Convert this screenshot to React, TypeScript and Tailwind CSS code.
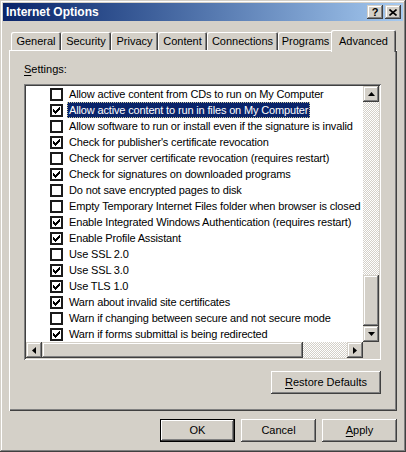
import React from 'react';

const settings: [string, boolean][] = [
  ['Allow active content from CDs to run on My Computer', false],
  ['Allow active content to run in files on My Computer', true],
  ['Allow software to run or install even if the signature is invalid', false],
  ["Check for publisher's certificate revocation", true],
  ['Check for server certificate revocation (requires restart)', false],
  ['Check for signatures on downloaded programs', true],
  ['Do not save encrypted pages to disk', false],
  ['Empty Temporary Internet Files folder when browser is closed', false],
  ['Enable Integrated Windows Authentication (requires restart)', true],
  ['Enable Profile Assistant', true],
  ['Use SSL 2.0', false],
  ['Use SSL 3.0', true],
  ['Use TLS 1.0', true],
  ['Warn about invalid site certificates', true],
  ['Warn if changing between secure and not secure mode', false],
  ['Warn if forms submittal is being redirected', true],
];

const tabs = [
  { label: 'General', w: 'w-[50px]' },
  { label: 'Security', w: 'w-[50px]' },
  { label: 'Privacy', w: 'w-[47px]' },
  { label: 'Content', w: 'w-[49px]' },
  { label: 'Connections', w: 'w-[71px]' },
  { label: 'Programs', w: 'w-[55px]' },
];

// classic 3d bevel for buttons / scroll parts
const raised =
  'bg-[#d4d0c8] shadow-[inset_-1px_-1px_#404040,inset_1px_1px_#d4d0c8,inset_-2px_-2px_#808080,inset_2px_2px_#ffffff]';
const pushBtn =
  'bg-[#d4d0c8] shadow-[inset_-1px_-1px_#404040,inset_1px_1px_#ffffff,inset_-2px_-2px_#808080,inset_2px_2px_#d4d0c8]';
const checker =
  'bg-[image:repeating-conic-gradient(#ffffff_0_25%,#d4d0c8_0_50%)] bg-[length:2px_2px]';

const Arrow = ({ dir }: { dir: 'up' | 'down' | 'left' | 'right' }) => {
  const pts = {
    up: '3.5,0 7,4 0,4',
    down: '0,0 7,0 3.5,4',
    left: '4,0 4,7 0,3.5',
    right: '0,0 4,3.5 0,7',
  }[dir];
  const vertical = dir === 'up' || dir === 'down';
  return (
    <svg width={vertical ? 7 : 4} height={vertical ? 4 : 7} viewBox={vertical ? '0 0 7 4' : '0 0 4 7'}>
      <polygon points={pts} fill="#000" />
    </svg>
  );
};

const CheckBox = ({ checked }: { checked: boolean }) => (
  <div className="w-[13px] h-[13px] shrink-0 bg-white border-2 border-[#1a1a1a] flex items-center justify-center">
    {checked && (
      <svg width="7" height="7" viewBox="0 0 7 7" shapeRendering="crispEdges">
        <rect x="0" y="2" width="1" height="3" fill="#000" />
        <rect x="1" y="3" width="1" height="3" fill="#000" />
        <rect x="2" y="4" width="1" height="3" fill="#000" />
        <rect x="3" y="3" width="1" height="3" fill="#000" />
        <rect x="4" y="2" width="1" height="3" fill="#000" />
        <rect x="5" y="1" width="1" height="3" fill="#000" />
        <rect x="6" y="0" width="1" height="3" fill="#000" />
      </svg>
    )}
  </div>
);

export default function App() {
  return (
    <div className="w-[406px] h-[452px] bg-[#d4d0c8] p-[3px] flex flex-col text-[11px] text-black font-['Liberation_Sans',Arial,sans-serif] shadow-[inset_-1px_-1px_#404040,inset_1px_1px_#d4d0c8,inset_-2px_-2px_#808080,inset_2px_2px_#ffffff] select-none">
      {/* Title bar */}
      <div className="h-[18px] shrink-0 flex items-center justify-between pl-[3px] pr-[2px] bg-gradient-to-r from-[#0a246a] to-[#a6caf0]">
        <span className="text-white font-bold text-[12px] leading-none">Internet Options</span>
        <div className="flex gap-[2px]">
          <div className={`${raised} w-[16px] h-[14px] flex items-center justify-center font-bold text-[11px] leading-none pt-px`}>?</div>
          <div className={`${raised} w-[16px] h-[14px] flex items-center justify-center`}>
            <svg width="8" height="7" viewBox="0 0 8 7">
              <path d="M0.5 0.5 L7.5 6.5 M7.5 0.5 L0.5 6.5" stroke="#000" strokeWidth="1.6" />
            </svg>
          </div>
        </div>
      </div>

      {/* Tabs + panel */}
      <div className="mt-[9px] px-[6px] flex flex-col">
        <div className="h-[20px] flex items-end pl-[2px]">
          {tabs.map((t) => (
            <div
              key={t.label}
              className={`${t.w} h-[18px] shrink-0 flex items-center justify-center pt-px rounded-t-[2px] shadow-[inset_1px_1px_#ffffff,inset_-1px_0_#404040,inset_-2px_0_#808080]`}
            >
              {t.label}
            </div>
          ))}
          <div className="w-[65px] h-[22px] -ml-[2px] -mb-[2px] shrink-0 relative z-10 bg-[#d4d0c8] flex justify-center pt-[3px] rounded-t-[2px] shadow-[inset_1px_1px_#ffffff,inset_-1px_0_#404040,inset_-2px_0_#808080]">
            Advanced
          </div>
        </div>

        <div className="w-[388px] h-[361px] flex flex-col pl-[15px] pt-[12px] shadow-[inset_1px_1px_#ffffff,inset_-1px_-1px_#404040,inset_-2px_-2px_#808080]">
          <div className="h-[14px] leading-[14px]">
            <span className="underline underline-offset-2">S</span>ettings:
          </div>

          {/* Settings list */}
          <div className="mt-[8px] w-[357px] h-[276px] p-[2px] bg-white flex flex-col shadow-[inset_1px_1px_#808080,inset_-1px_-1px_#ffffff,inset_2px_2px_#404040,inset_-2px_-2px_#d4d0c8]">
            <div className="h-[256px] flex">
              <div className="flex-1 overflow-hidden tracking-[-0.15px]">
                {settings.map(([label, checked], i) => (
                  <div key={label} className="h-[16px] flex items-center pl-[24px] whitespace-nowrap">
                    <CheckBox checked={checked} />
                    <span
                      className={
                        i === 1
                          ? 'ml-[4px] h-[16px] leading-[14px] px-[1px] bg-[#0a246a] text-white border border-dotted border-[#c8c49a]'
                          : 'ml-[4px] px-[2px] leading-[16px]'
                      }
                    >
                      {label}
                    </span>
                  </div>
                ))}
              </div>
              <div className="w-[16px] flex flex-col">
                <div className={`${raised} h-[16px] flex items-center justify-center`}>
                  <Arrow dir="up" />
                </div>
                <div className={`${checker} flex-1`} />
                <div className={`${raised} h-[51px]`} />
                <div className={`${raised} h-[16px] flex items-center justify-center`}>
                  <Arrow dir="down" />
                </div>
              </div>
            </div>
            <div className="h-[16px] flex">
              <div className="flex-1 flex">
                <div className={`${raised} w-[16px] flex items-center justify-center`}>
                  <Arrow dir="left" />
                </div>
                <div className={`${raised} w-[261px]`} />
                <div className={`${checker} flex-1`} />
                <div className={`${raised} w-[16px] flex items-center justify-center`}>
                  <Arrow dir="right" />
                </div>
              </div>
              <div className="w-[16px] bg-[#d4d0c8]" />
            </div>
          </div>

          <div className="mt-[11px] w-[357px] flex justify-end">
            <div className={`${pushBtn} w-[110px] h-[23px] flex items-center justify-center`}>
              <span>
                <span className="underline underline-offset-2">R</span>estore Defaults
              </span>
            </div>
          </div>
        </div>
      </div>

      {/* Dialog buttons */}
      <div className="mt-[8px] px-[6px] flex justify-end gap-[6px]">
        <div className="w-[75px] h-[23px] border border-black">
          <div className={`${pushBtn} w-full h-full flex items-center justify-center`}>OK</div>
        </div>
        <div className={`${pushBtn} w-[75px] h-[23px] flex items-center justify-center`}>Cancel</div>
        <div className={`${pushBtn} w-[75px] h-[23px] flex items-center justify-center`}>
          <span>
            <span className="underline underline-offset-2">A</span>pply
          </span>
        </div>
      </div>
    </div>
  );
}
